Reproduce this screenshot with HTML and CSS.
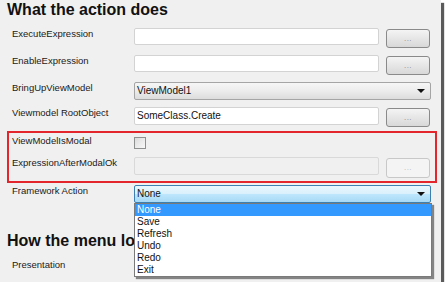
FILE: index.html
```html
<!DOCTYPE html>
<html lang="en">
<head>
    <meta charset="UTF-8">
    <title>What the action does</title>
    <link rel="stylesheet" href="styles.css">
</head>
<body>

    <div class="panel">
        <h2 class="section-title">What the action does</h2>

        <div class="row row-tall">
            <div class="field-label">ExecuteExpression</div>
            <div class="text-box"></div>
            <div class="dots-button">...</div>
        </div>
        <div class="row row-tall">
            <div class="field-label">EnableExpression</div>
            <div class="text-box"></div>
            <div class="dots-button">...</div>
        </div>
        <div class="row row-mid">
            <div class="field-label">BringUpViewModel</div>
            <div class="combo">
                <div class="combo-box">ViewModel1<span class="arrow"></span></div>
            </div>
        </div>
        <div class="row row-root">
            <div class="field-label">Viewmodel RootObject</div>
            <div class="text-box text-box-big">SomeClass.Create</div>
            <div class="dots-button">...</div>
        </div>
        <div class="row row-check">
            <div class="field-label">ViewModelIsModal</div>
            <div class="check-box"></div>
        </div>
        <div class="row row-root">
            <div class="field-label">ExpressionAfterModalOk</div>
            <div class="text-box disabled"></div>
            <div class="dots-button disabled">...</div>
        </div>
        <div class="row row-action">
            <div class="field-label">Framework Action</div>
            <div class="combo">
                <div class="combo-box focused">None<span class="arrow"></span></div>
                <ul class="drop-list">
                    <li class="selected">None</li>
                    <li>Save</li>
                    <li>Refresh</li>
                    <li>Undo</li>
                    <li>Redo</li>
                    <li>Exit</li>
                </ul>
            </div>
        </div>

        <h2 class="section-title">How the menu looks</h2>
        <div class="row">
            <div class="field-label">Presentation</div>
        </div>

        <!-- annotation drawn over the two modal rows -->
        <div class="highlight"></div>
    </div>

</body>
</html>
```

FILE: styles.css
```css
body {
    margin: 0;
    background-color: #fff;
    font-family: 'Liberation Sans', Arial, sans-serif;
}

.panel {
    position: relative;
    width: 441px;
    height: 282px;
    background-color: #f0f0f0;
    box-shadow: 3px 3px 1px #5a5a5a;
    overflow: hidden;
}

.section-title {
    margin: 0 0 8px 0;
    padding-left: 7px;
    font-size: 16px;
    line-height: 20px;
    font-weight: bold;
    color: #111;
}

.row {
    display: flex;
    align-items: flex-start;
}

.row-tall { height: 27px; }
.row-mid { height: 25px; }
.row-root { height: 28px; }
.row-check { height: 22px; }
.row-action { height: 46px; }

.field-label {
    width: 134px;
    padding-left: 12px;
    box-sizing: border-box;
    flex-shrink: 0;
    font-size: 9.5px;
    line-height: 12px;
    color: #1a1a1a;
}

.text-box {
    width: 245px;
    height: 17px;
    box-sizing: border-box;
    background-color: #fff;
    border: 1px solid #d3d3d3;
    border-radius: 2px;
    padding-left: 2px;
    font-size: 10px;
    line-height: 16px;
    color: #111;
}

.text-box-big {
    height: 18px;
}

.text-box.disabled {
    height: 18px;
    background-color: #f0f0f0;
    border-color: #d9d9d9;
}

.dots-button {
    width: 44px;
    height: 19px;
    margin: 1px 0 0 7px;
    box-sizing: border-box;
    border: 1px solid #8a8a8a;
    border-radius: 3px;
    background: linear-gradient(#f4f4f4, #e6e6e6 50%, #d8d8d8);
    font-size: 8px;
    line-height: 17px;
    text-align: center;
    color: #8a8a8a;
    letter-spacing: 0.5px;
}

.dots-button.disabled {
    height: 20px;
    border-color: #c8c8c8;
    background: #f4f4f4;
    color: #bbb;
}

.check-box {
    width: 12px;
    height: 12px;
    margin-top: 2px;
    box-sizing: border-box;
    border: 1px solid #8e8f8f;
    background: linear-gradient(135deg, #dcdcdc, #f8f8f8);
}

.combo {
    position: relative;
}

.combo-box {
    position: relative;
    width: 297px;
    height: 18px;
    box-sizing: border-box;
    border: 1px solid #a5a5a5;
    border-radius: 2px;
    background: linear-gradient(#f6f6f6, #ececec 50%, #dcdcdc);
    padding-left: 2px;
    font-size: 10px;
    line-height: 16px;
    color: #111;
}

.combo-box.focused {
    border-color: #3c7fb1;
    background: linear-gradient(#eaf6fd, #d9f0fc 50%, #bee6fd 51%, #a7d9f5);
}

.arrow {
    position: absolute;
    right: 5px;
    top: 6px;
    border-left: 4px solid transparent;
    border-right: 4px solid transparent;
    border-top: 4px solid #111;
}

.drop-list {
    position: absolute;
    left: 0;
    top: 18px;
    z-index: 2;
    width: 298px;
    height: 74px;
    margin: 0;
    padding: 0;
    box-sizing: border-box;
    list-style: none;
    background-color: #fff;
    border: 1px solid #7a7a7a;
    box-shadow: 2px 2px 1px rgba(0, 0, 0, 0.45);
}

.drop-list li {
    height: 12px;
    padding-left: 2px;
    font-size: 10px;
    line-height: 12px;
    color: #111;
}

.drop-list li.selected {
    background-color: #3399ff;
    color: #fff;
}

.highlight {
    position: absolute;
    left: 7px;
    top: 131px;
    width: 430px;
    height: 52px;
    box-sizing: border-box;
    border: 2px solid #e3262c;
}
```
